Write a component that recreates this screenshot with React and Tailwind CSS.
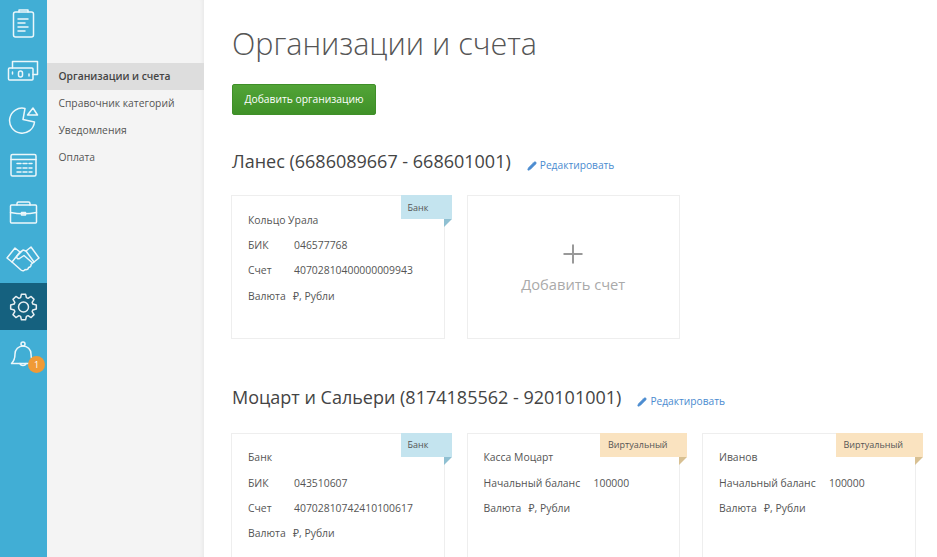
import React from 'react';
import { Pencil, Plus } from 'lucide-react';

// eight tooth gear outline, centred in the 47px rail cell
const gearPath = () => {
  const pts = [];
  for (let i = 0; i < 8; i++) {
    const a = (i * Math.PI) / 4 - Math.PI / 2;
    [[-0.3, 9.8], [-0.16, 13], [0.16, 13], [0.3, 9.8]].forEach(([d, r]) => {
      pts.push(`${(23.5 + r * Math.cos(a + d)).toFixed(2)} ${(24 + r * Math.sin(a + d)).toFixed(2)}`);
    });
  }
  return `M${pts.join('L')}z`;
};

const railIcons = [
  // clipboard
  <g key="a"><rect x="13.5" y="11" width="20" height="25" rx="2" /><path d="M19 11V9h9v2M18 18h10M18 22h7M18 26h10M18 30h7" /></g>,
  // money
  <g key="b"><path d="M12.5 20v-6.5h25v13H33" /><rect x="8.5" y="20" width="24.5" height="12" rx="1" /><rect x="18.5" y="23" width="4" height="6" rx="2" /><path d="M12.5 24v2M29 26v2" /></g>,
  // pie chart
  <g key="c"><path d="M25 13.5A12.5 12.5 0 1 0 34.5 27L23 24.5z" /><path d="M27.5 20l5.5-7 4.5 7z" /></g>,
  // calendar
  <g key="d"><rect x="11" y="12.5" width="25" height="21.5" rx="1.5" /><path d="M11 17.5h25M17 21.5h4M23 21.5h4M29 21.5h3M17 26h4M23 26h4M29 26h3M17 30h4M23 30h4M29 30h3" /></g>,
  // briefcase
  <g key="e"><rect x="10.5" y="16" width="26" height="18" rx="1" /><path d="M17 16v-1.5a1.5 1.5 0 0 1 1.5-1.5h10a1.5 1.5 0 0 1 1.5 1.5V16M10.5 23.5c8 1.5 18 1.5 26 0" /><rect x="21.5" y="23.5" width="4" height="2.5" /></g>,
  // handshake
  <g key="f"><path d="M7 22l8-10 5 4-8 10zM31 11l8 11-5 4-8-11z" /><path d="M12 26l9 8c2 1.5 3.5.5 4-.5 2 .5 3.5-.5 3.5-2 1.5 0 3-1.5 2.5-3l3-2.5" /><path d="M26 15l-3-1-6 6c-1 1.5.5 3.5 2.5 2.5l4.5-3 8 7M20 16l3-2" /></g>,
  // gear
  <g key="g"><path d={gearPath()} /><circle cx="23.5" cy="24" r="5" /></g>,
  // bell
  <g key="h"><path d="M23 16a8 8 0 0 0-8 8c0 5-1.5 7.5-3.5 9.5h23c-2-2-3.5-4.5-3.5-9.5a8 8 0 0 0-8-8z" /><circle cx="23" cy="14" r="2" /><path d="M20 33.5c.5 2.5 5.5 2.5 6 0" /></g>,
];

const subNav = ['Организации и счета', 'Справочник категорий', 'Уведомления', 'Оплата'];

const Ribbon = ({ text, wide }) => (
  <div className={`absolute -top-px -right-2 ${wide ? 'w-[87px] bg-[#fae3c0] pl-2' : 'w-[51px] bg-[#c4e4ef] pl-[7px]'} flex h-6 items-center text-[9px] text-[#555]`}>
    {text}
    <svg className="absolute top-6 right-0" width="8" height="8" viewBox="0 0 8 8">
      <path d="M0 0h8L0 8z" fill={wide ? '#d8c092' : '#8fc0d2'} />
    </svg>
  </div>
);

const Row = ({ label, value, labelWidth }) => (
  <div className="flex h-[25.2px] items-center">
    <span className={labelWidth}>{label}</span>
    <span>{value}</span>
  </div>
);

const BankCard = ({ name, bik, account }) => (
  <div className="relative h-[144px] w-[213.5px] shrink-0 border border-[#eeeeee] bg-white pt-3 pl-4 text-[10.4px] text-[#555]">
    <Ribbon text="Банк" />
    <div className="flex h-[25.2px] items-center">{name}</div>
    <Row label="БИК" value={bik} labelWidth="w-[46px]" />
    <Row label="Счет" value={account} labelWidth="w-[46px]" />
    <Row label="Валюта" value="₽, Рубли" labelWidth="w-[45px]" />
  </div>
);

const VirtualCard = ({ name }) => (
  <div className="relative h-[144px] w-[213.5px] shrink-0 border border-[#eeeeee] bg-white pt-3 pl-4 text-[10.4px] text-[#555]">
    <Ribbon text="Виртуальный" wide />
    <div className="flex h-[25.2px] items-center">{name}</div>
    <Row label="Начальный баланс" value="100000" labelWidth="w-[110px]" />
    <Row label="Валюта" value="₽, Рубли" labelWidth="w-[45px]" />
  </div>
);

const OrgHeading = ({ title, className }) => (
  <div className={`flex items-center ${className}`}>
    <h2 className="ml-px text-[18px] leading-6 text-[#444]">{title}</h2>
    <a className="mt-[9px] ml-4 flex items-center gap-[3px] text-[10.2px] text-[#4a8bd0]">
      <Pencil size={10} fill="currentColor" />
      Редактировать
    </a>
  </div>
);

const App = () => {
  return (
    <div className="flex h-[557px] w-[937px] overflow-hidden bg-white font-['Open_Sans','Noto_Sans',sans-serif]">
      {/* Icon rail */}
      <div className="w-[47px] shrink-0 bg-[#41aed5] pt-px">
        {railIcons.map((icon, i) => (
          <div key={i} className={`relative h-[47px] ${i === 6 ? 'bg-[#15617f]' : ''}`}>
            <svg width="47" height="47" viewBox="0 0 47 47" fill="none" stroke="white" strokeWidth="1.5" strokeLinejoin="round" strokeLinecap="round" className="opacity-90">
              {icon}
            </svg>
            {i === 7 && (
              <span className="absolute top-[26px] left-[28px] flex h-[17px] w-[17px] items-center justify-center rounded-full bg-[#f09a36] text-[9px] text-white">1</span>
            )}
          </div>
        ))}
      </div>

      {/* Sub navigation */}
      <div className="w-[157px] shrink-0 bg-[#f4f4f4] pt-[63px] text-[10.3px] text-[#555] shadow-[inset_-4px_0_4px_-3px_rgba(0,0,0,0.06)]">
        {subNav.map((item, i) => (
          <div key={item} className={`flex h-[27px] items-center pl-[11.5px] ${i === 0 ? 'bg-[#dddddd] font-semibold text-[#444]' : ''}`}>
            {item}
          </div>
        ))}
      </div>

      {/* Main */}
      <div className="flex-1 pt-[21px] pl-[27px]">
        <h1 className="ml-px text-[30.5px] leading-[45px] font-light text-[#555]">Организации и счета</h1>
        <button className="mt-[18px] ml-px h-[31px] w-[144px] rounded-[2px] border border-[#3f8f28] bg-gradient-to-b from-[#52a437] to-[#3f9128] text-[10.3px] text-white">
          Добавить организацию
        </button>

        <OrgHeading title="Ланес (6686089667 - 668601001)" className="mt-[34px]" />
        <div className="mt-[22px] flex gap-[22px]">
          <BankCard name="Кольцо Урала" bik="046577768" account="40702810400000009943" />
          <div className="flex h-[144px] w-[213.5px] shrink-0 flex-col items-center border border-[#eeeeee] pt-[43px] text-[#aaa]">
            <Plus size={30} strokeWidth={1.6} className="text-[#999]" />
            <span className="mt-[5px] text-[14.7px] leading-5">Добавить счет</span>
          </div>
        </div>

        <OrgHeading title="Моцарт и Сальери (8174185562 - 920101001)" className="mt-[46px]" />
        <div className="mt-[23px] flex gap-[22px]">
          <BankCard name="Банк" bik="043510607" account="40702810742410100617" />
          <VirtualCard name="Касса Моцарт" />
          <VirtualCard name="Иванов" />
        </div>
      </div>
    </div>
  );
};

export default App;
